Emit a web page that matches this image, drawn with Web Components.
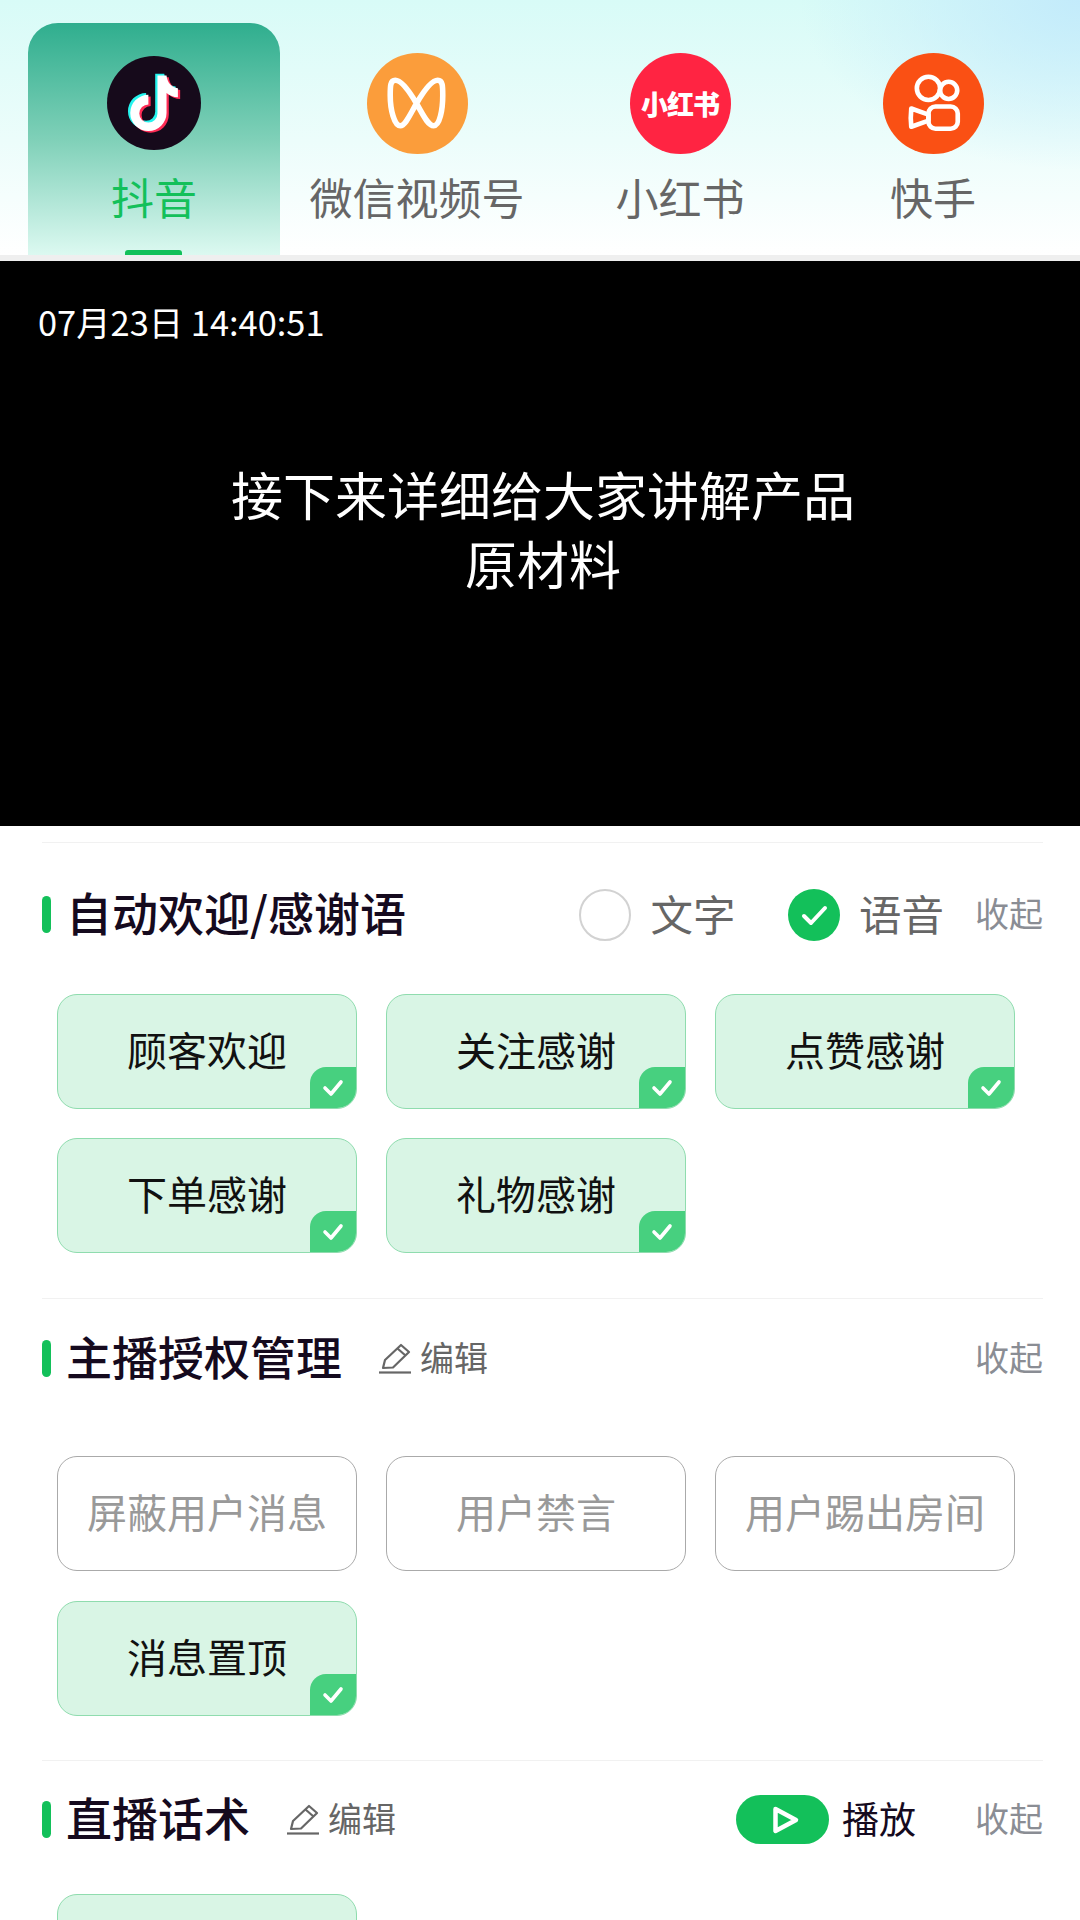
<!DOCTYPE html>
<html lang="zh">
<head>
<meta charset="utf-8">
<title>直播助手</title>
<style>
    html, body {
        margin: 0;
        padding: 0;
        background: #fff;
    }

    body {
        width: 1080px;
        height: 1920px;
        overflow: hidden;
        font-family: "Noto Sans CJK SC", "Noto Sans", sans-serif;
    }

    .logo-text {
        color: #fff;
        font-size: 27px;
        font-weight: 900;
        letter-spacing: -1px;
        white-space: nowrap;
    }
</style>
</head>
<body>

<template id="tab-bar-template">
    <style>
        :host {
            display: block;
            box-sizing: content-box;
            height: 255px;
            border-bottom: 6px solid #efefef;
            background:
                radial-gradient(ellipse 280px 170px at 100% 0, #c3ebfb 0%, rgba(195, 235, 251, 0) 100%),
                linear-gradient(180deg, #d8fbf7 0%, #ecfdfb 55%, #ffffff 100%);
        }

        .tabs {
            display: flex;
            align-items: flex-end;
            height: 100%;
            padding-left: 28px;
        }
    </style>
    <div class="tabs"><slot></slot></div>
</template>

<template id="app-tab-template">
    <style>
        :host {
            display: block;
            flex: none;
            position: relative;
            box-sizing: border-box;
            height: 232px;
            padding-top: 30px;
            border-radius: 30px 30px 0 0;
            color: #666;
        }

        :host([active]) {
            color: #13c05a;
            background: linear-gradient(180deg, #2fae8e 0%, #7fd0b8 50%, #dcf9f1 100%);
        }

        .icon {
            height: 100px;
            display: flex;
            justify-content: center;
            align-items: center;
        }

        .label {
            margin-top: 18px;
            font-size: 43px;
            line-height: 50px;
            text-align: center;
            white-space: nowrap;
        }

        .bar {
            display: none;
            position: absolute;
            left: 97px;
            bottom: 0;
            width: 57px;
            height: 5px;
            border-radius: 3px 3px 0 0;
            background: #13c05a;
        }

        :host([active]) .bar {
            display: block;
        }
    </style>
    <div class="icon"><slot name="icon"></slot></div>
    <div class="label"></div>
    <div class="bar"></div>
</template>

<template id="round-logo-template">
    <style>
        :host {
            display: flex;
            justify-content: center;
            align-items: center;
            width: var(--size, 101px);
            height: var(--size, 101px);
            border-radius: 50%;
            background: var(--bg, #000);
        }

        ::slotted(svg) {
            display: block;
            width: 100%;
            height: 100%;
        }
    </style>
    <slot></slot>
</template>

<template id="video-panel-template">
    <style>
        :host {
            display: block;
            box-sizing: border-box;
            height: 565px;
            padding: 35px 35px 0 38px;
            background: #000;
            color: #fff;
        }

        .time {
            font-size: 34.4px;
            line-height: 50px;
        }

        .caption {
            margin-top: 113px;
            padding-left: 3px;
            font-size: 52px;
            line-height: 69px;
            text-align: center;
        }
    </style>
    <div class="time"><slot name="time"></slot></div>
    <div class="caption"><slot></slot></div>
</template>

<template id="panel-section-template">
    <style>
        :host {
            display: block;
            margin: 0 37px 0 42px;
            padding-top: var(--head-top);
            padding-bottom: var(--bottom, 44px);
            border-top: 1px solid #f1f1f1;
        }

        .head {
            display: flex;
            align-items: center;
            height: 60px;
        }

        .mark {
            flex: none;
            width: 9px;
            height: 37px;
            margin-top: 1px;
            border-radius: 5px;
            background: #13c05a;
        }

        .title {
            margin-left: 15px;
            padding-bottom: 6px;
            font-size: 46px;
            font-weight: 500;
            line-height: 54px;
            color: #150a1e;
            white-space: nowrap;
        }

        .extra {
            flex: 1;
            display: flex;
            align-items: center;
            min-width: 0;
        }

        .fold {
            flex: none;
            padding-bottom: 3px;
            font-size: 34px;
            color: #8a8d94;
            white-space: nowrap;
        }

        .cards {
            display: grid;
            grid-template-columns: repeat(3, 300px);
            gap: 29.5px 29px;
            margin: var(--cards-top) 0 0 15px;
        }
    </style>
    <div class="head">
        <div class="mark"></div>
        <div class="title"></div>
        <div class="extra"><slot name="extra"></slot></div>
        <div class="fold">收起</div>
    </div>
    <div class="cards"><slot></slot></div>
</template>

<template id="option-card-template">
    <style>
        :host {
            display: flex;
            justify-content: center;
            align-items: center;
            position: relative;
            box-sizing: border-box;
            height: 115px;
            padding-bottom: 5px;
            overflow: hidden;
            border: 1.5px solid #aaa;
            border-radius: 20px;
            background: #fff;
            color: #999;
            font-size: 40px;
            white-space: nowrap;
        }

        :host([selected]) {
            border-color: #8fdcae;
            background: #d9f5e5;
            color: #111;
        }

        .badge {
            display: none;
            position: absolute;
            right: 0;
            bottom: 0;
            width: 46px;
            height: 41px;
            border-radius: 16px 0 0 0;
            background: #47d07f;
        }

        :host([selected]) .badge {
            display: block;
        }

        svg {
            display: block;
        }
    </style>
    <slot></slot>
    <div class="badge">
        <svg width="46" height="41" viewBox="0 0 46 41" fill="none" stroke="#fff" stroke-width="3.6" stroke-linecap="round" stroke-linejoin="round">
            <path d="M15 21 L21 27 L31 15"/>
        </svg>
    </div>
</template>

<template id="mode-radio-template">
    <style>
        :host {
            display: flex;
            align-items: center;
            flex: none;
            gap: 19px;
            font-size: 42.5px;
            color: #666;
            white-space: nowrap;
        }

        .dot {
            box-sizing: border-box;
            width: 52px;
            height: 52px;
            margin-top: 1px;
            border: 2.5px solid #d2d2d2;
            border-radius: 50%;
        }

        :host([checked]) .dot {
            border: 0;
            background: #13c05a;
        }

        .text {
            padding-bottom: 4px;
        }

        svg {
            display: none;
        }

        :host([checked]) svg {
            display: block;
        }
    </style>
    <div class="dot">
        <svg width="52" height="52" viewBox="0 0 52 52" fill="none" stroke="#fff" stroke-width="4" stroke-linecap="round" stroke-linejoin="round">
            <path d="M16 27 L23 34 L37 19"/>
        </svg>
    </div>
    <div class="text"><slot></slot></div>
</template>

<template id="edit-link-template">
    <style>
        :host {
            display: flex;
            align-items: center;
            flex: none;
            gap: 9px;
            font-size: 34px;
            color: #666;
            white-space: nowrap;
        }

        .text {
            padding-bottom: 3px;
        }

        svg {
            display: block;
        }
    </style>
    <svg width="32" height="32" viewBox="0 0 32 32" fill="none" stroke="#666" stroke-width="2.2" stroke-linejoin="round">
        <path d="M0 30.5 H32"/>
        <path d="M4 26 L6 18 L22 3 L30 10 L14 25.5 Z"/>
        <path d="M18.5 6.5 L26.5 13.5"/>
    </svg>
    <div class="text"><slot></slot></div>
</template>

<template id="play-button-template">
    <style>
        :host {
            display: flex;
            align-items: center;
            flex: none;
            gap: 13px;
            font-size: 37px;
            color: #150a1e;
            white-space: nowrap;
        }

        .text {
            padding-bottom: 3px;
        }

        svg {
            display: block;
        }
    </style>
    <svg width="93" height="49" viewBox="0 0 93 49">
        <rect width="93" height="49" rx="24.5" fill="#13c05a"/>
        <path d="M39.5 14 L60 25 L39.5 36 Z" fill="none" stroke="#fff" stroke-width="4.5" stroke-linejoin="round"/>
    </svg>
    <div class="text"><slot></slot></div>
</template>

<tab-bar>
    <app-tab label="抖音" active style="width:252px">
        <round-logo slot="icon" style="--size:94px;--bg:#160a1b">
            <svg viewBox="0 0 285 285">
                <g transform="translate(24 16) scale(.86)">
                    <path fill="#25f4ee" transform="translate(-8 -6)" d="M150 50 H182 C184 75 200 92 222 95 V127 C206 127 193 121 182 112 V182 A64 64 0 1 1 118 118 V152 A32 32 0 1 0 150 184 Z"/>
                    <path fill="#fe2c55" transform="translate(8 6)" d="M150 50 H182 C184 75 200 92 222 95 V127 C206 127 193 121 182 112 V182 A64 64 0 1 1 118 118 V152 A32 32 0 1 0 150 184 Z"/>
                    <path fill="#fff" d="M150 50 H182 C184 75 200 92 222 95 V127 C206 127 193 121 182 112 V182 A64 64 0 1 1 118 118 V152 A32 32 0 1 0 150 184 Z"/>
                </g>
            </svg>
        </round-logo>
    </app-tab>
    <app-tab label="微信视频号" style="width:274px">
        <round-logo slot="icon" style="--bg:#fb9d3b">
            <svg viewBox="0 0 100 100" fill="none" stroke="#fff" stroke-width="5.5" stroke-linejoin="round">
                <path d="M49 50 C42 38 34 27 28 27 C23 27 23 33 23 42 C23 56 27 72 33 72 C38 72 43 60 49 50 C55 60 60 72 66 72 C72 72 75 56 75 42 C75 33 75 27 70 27 C64 27 56 38 49 50 Z"/>
            </svg>
        </round-logo>
    </app-tab>
    <app-tab label="小红书" style="width:252px">
        <round-logo slot="icon" style="--bg:#ff2442">
            <span class="logo-text">小红书</span>
        </round-logo>
    </app-tab>
    <app-tab label="快手" style="width:254px">
        <round-logo slot="icon" style="--bg:#fa5014">
            <svg viewBox="0 0 100 100" fill="none" stroke="#fff" stroke-width="4.6" stroke-linejoin="round">
                <circle cx="45" cy="35" r="11.5"/>
                <circle cx="65" cy="37" r="8.5"/>
                <rect x="45" y="53" width="29" height="22" rx="7"/>
                <path d="M28 55 L45 61 V67 L28 73 Q27 64 28 55 Z"/>
            </svg>
        </round-logo>
    </app-tab>
</tab-bar>

<video-panel>
    <span slot="time">07月23日 14:40:51</span>
    接下来详细给大家讲解产品<br>原材料
</video-panel>

<panel-section title="自动欢迎/感谢语" style="--head-top:41px;--cards-top:49.5px;--bottom:45px;margin-top:16px">
    <div slot="extra" style="display:flex;align-items:center;flex:1;justify-content:flex-end;padding-right:31px;gap:52.5px">
        <mode-radio>文字</mode-radio>
        <mode-radio checked>语音</mode-radio>
    </div>
    <option-card selected>顾客欢迎</option-card>
    <option-card selected>关注感谢</option-card>
    <option-card selected>点赞感谢</option-card>
    <option-card selected>下单感谢</option-card>
    <option-card selected>礼物感谢</option-card>
</panel-section>

<panel-section title="主播授权管理" style="--head-top:29px;--cards-top:68px;--bottom:44.5px">
    <edit-link slot="extra" style="margin-left:37px">编辑</edit-link>
    <option-card>屏蔽用户消息</option-card>
    <option-card>用户禁言</option-card>
    <option-card>用户踢出房间</option-card>
    <option-card selected>消息置顶</option-card>
</panel-section>

<panel-section title="直播话术" style="--head-top:28px;--cards-top:45px">
    <edit-link slot="extra" style="margin-left:37px">编辑</edit-link>
    <play-button slot="extra" style="margin-left:auto;margin-right:59px">播放</play-button>
    <option-card selected></option-card>
</panel-section>

<script>
    // plain shadow-root element: clones its template, optional label/title text set from attribute
    function defineFromTemplate(name, onCreate) {
        customElements.define(
            name,
            class extends HTMLElement {
                constructor() {
                    super();
                    const template_clone = document.getElementById(name + "-template").content.cloneNode(true);
                    this.attachShadow({ mode: "open" }).append(template_clone);
                    if (onCreate) onCreate(this);
                }
            },
        );
    }

    defineFromTemplate("tab-bar");
    defineFromTemplate("app-tab", (el) => {
        el.shadowRoot.querySelector(".label").textContent = el.getAttribute("label");
    });
    defineFromTemplate("round-logo");
    defineFromTemplate("video-panel");
    defineFromTemplate("panel-section", (el) => {
        el.shadowRoot.querySelector(".title").textContent = el.getAttribute("title");
    });
    defineFromTemplate("option-card");
    defineFromTemplate("mode-radio");
    defineFromTemplate("edit-link");
    defineFromTemplate("play-button");
</script>
</body>
</html>
